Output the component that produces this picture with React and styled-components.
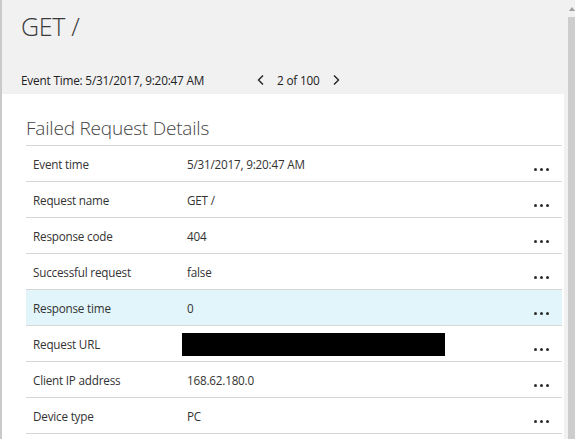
import React from "react";
import styled, { createGlobalStyle } from "styled-components";

const GlobalStyle = createGlobalStyle`
  html, body {
    margin: 0;
    padding: 0;
    overflow: hidden;
    background: #f1f1f1;
  }
`;

const Frame = styled.div`
  display: flex;
  height: 439px;
  border-left: 2px solid #cacaca;
  font-family: "Open Sans", "Noto Sans", sans-serif;
  color: #333;
`;

const Main = styled.div`
  flex: 1;
  display: flex;
  flex-direction: column;
  min-width: 0;
`;

const Header = styled.div`
  height: 94px;
  box-sizing: border-box;
  background: #f1f1f1;
  padding: 9px 0 0 19px;
  display: flex;
  flex-direction: column;
`;

const Title = styled.h1`
  margin: 0;
  font-size: 25px;
  font-weight: 300;
  color: #3a3a3a;
  letter-spacing: -0.3px;
`;

const MetaBar = styled.div`
  margin-top: 29px;
  display: flex;
  align-items: center;
  font-size: 11.8px;
  letter-spacing: -0.2px;
  color: #222;
`;

const EventTime = styled.span`
  width: 235px;
`;

const Pager = styled.div`
  display: flex;
  align-items: center;
  gap: 11px;
`;

const Chevron = styled.svg`
  width: 10px;
  height: 12px;
`;

const Body = styled.div`
  flex: 1;
  background: #fff;
  padding: 21px 2px 0 24px;
`;

const SectionTitle = styled.h2`
  margin: 0 0 4px 0;
  font-size: 19px;
  font-weight: 300;
  color: #444;
  letter-spacing: -0.2px;
`;

const Table = styled.div`
  border-top: 1px solid #d6d6d6;
`;

const Row = styled.div`
  display: flex;
  height: 35px;
  border-bottom: 1px solid #d6d6d6;
  background: ${(p) => (p.selected ? "#e1f5fa" : "#fff")};
  font-size: 11.7px;
  letter-spacing: -0.2px;
`;

const Label = styled.div`
  width: 161px;
  padding: 10px 0 0 7px;
  box-sizing: border-box;
  color: #333;
`;

const Value = styled.div`
  flex: 1;
  padding-top: 10px;
  color: #333;
`;

const Redacted = styled.div`
  width: 263px;
  height: 23px;
  margin: -3px 0 0 -5px;
  background: #000;
`;

const More = styled.div`
  display: flex;
  gap: 3px;
  padding: 22px 13px 0 0;
`;

const Dot = styled.span`
  width: 3px;
  height: 3px;
  border-radius: 50%;
  background: #2b2b2b;
`;

const Scrollbar = styled.div`
  width: 11px;
  background: #f1f1f1;
  display: flex;
  flex-direction: column;
  padding-left: 4px;
  box-sizing: border-box;
`;

const ArrowUp = styled.div`
  margin: 7px 0 0 1px;
  width: 0;
  height: 0;
  border-left: 3px solid transparent;
  border-right: 3px solid transparent;
  border-bottom: 4px solid #a0a0a0;
`;

const Thumb = styled.div`
  margin-top: 6px;
  flex: 1;
  background: #cdcdcd;
`;

const rows = [
  ["Event time", "5/31/2017, 9:20:47 AM"],
  ["Request name", "GET /"],
  ["Response code", "404"],
  ["Successful request", "false"],
  ["Response time", "0", true],
  ["Request URL", null],
  ["Client IP address", "168.62.180.0"],
  ["Device type", "PC"],
];

export default function App() {
  return (
    <>
      <GlobalStyle />
      <Frame>
        <Main>
          <Header>
            <Title>GET /</Title>
            <MetaBar>
              <EventTime>Event Time: 5/31/2017, 9:20:47 AM</EventTime>
              <Pager>
                <Chevron viewBox="0 0 10 12">
                  <path d="M7 1.5 L2.5 6 L7 10.5" fill="none" stroke="#222" strokeWidth="1.4" />
                </Chevron>
                <span>2 of 100</span>
                <Chevron viewBox="0 0 10 12">
                  <path d="M3 1.5 L7.5 6 L3 10.5" fill="none" stroke="#222" strokeWidth="1.4" />
                </Chevron>
              </Pager>
            </MetaBar>
          </Header>
          <Body>
            <SectionTitle>Failed Request Details</SectionTitle>
            <Table>
              {rows.map(([label, value, selected]) => (
                <Row key={label} selected={selected}>
                  <Label>{label}</Label>
                  <Value>{value === null ? <Redacted /> : value}</Value>
                  <More>
                    <Dot />
                    <Dot />
                    <Dot />
                  </More>
                </Row>
              ))}
            </Table>
          </Body>
        </Main>
        <Scrollbar>
          <ArrowUp />
          <Thumb />
        </Scrollbar>
      </Frame>
    </>
  );
}
